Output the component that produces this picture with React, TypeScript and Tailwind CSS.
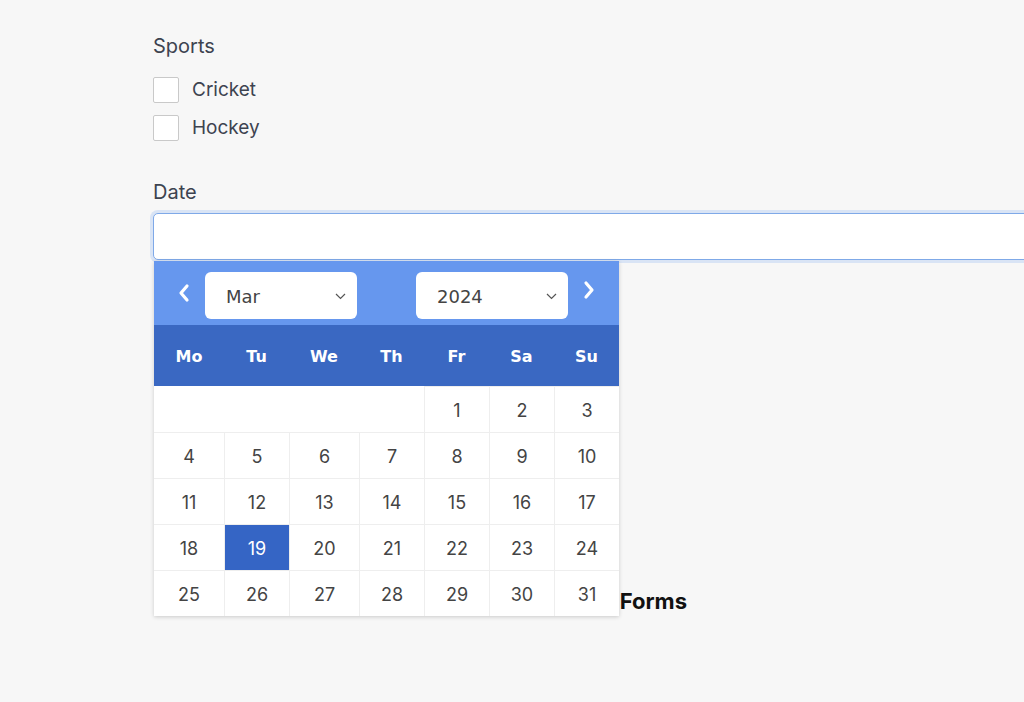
import React from 'react';

const widths = ['w-[70px]', 'w-[65px]', 'w-[70px]', 'w-[65px]', 'w-[65px]', 'w-[65px]', 'w-[65px]'];
const dayNames = ['Mo', 'Tu', 'We', 'Th', 'Fr', 'Sa', 'Su'];

function buildWeeks() {
  const cells: (number | null)[] = [null, null, null, null];
  for (let d = 1; d <= 31; d++) cells.push(d);
  const weeks: (number | null)[][] = [];
  for (let i = 0; i < cells.length; i += 7) weeks.push(cells.slice(i, i + 7));
  return weeks;
}

function SelectBox({ value }: { value: string }) {
  return (
    <div className="flex items-center justify-between w-[152px] h-[47px] bg-white rounded-[6px] pl-[21px] pr-[11px] pt-[2px] text-[18px] text-[#444]" style={{ fontFamily: '"DejaVu Sans", sans-serif' }}>
      <span>{value}</span>
      <svg width="11" height="7" viewBox="0 0 11 7" fill="none">
        <polyline points="1,1 5.5,5.5 10,1" stroke="#555" strokeWidth="1.2" />
      </svg>
    </div>
  );
}

export default function App() {
  const weeks = buildWeeks();

  return (
    <div className="min-h-[702px] bg-[#f7f7f7] text-[#3d4350]" style={{ fontFamily: 'Inter, "Noto Sans", sans-serif' }}>
      <div className="relative pl-[153px] pt-[32px] overflow-hidden h-[702px]">
        <div className="text-[20px] leading-[28px]">Sports</div>

        <div className="mt-[17px] flex flex-col gap-[12px]">
          {['Cricket', 'Hockey'].map((s) => (
            <label key={s} className="flex items-center gap-[13px] h-[26px]">
              <span className="w-[26px] h-[26px] bg-white border border-[#c9c9c9] rounded-[2px]" />
              <span className="text-[19px]">{s}</span>
            </label>
          ))}
        </div>

        <div className="mt-[37px] text-[20px] leading-[28px]">Date</div>
        <div className="mt-[7px] w-[900px] h-[47px] bg-white border border-[#7fa9e8] rounded-[5px] shadow-[0_0_0_3px_rgba(128,170,240,0.25)]" />

        <div className="mt-[325px] w-[534px] text-right text-[22px] font-bold text-[#111]">
          Forms
        </div>

        <div className="absolute left-[154px] top-[261px] w-[465px] bg-white shadow-[0_1px_4px_rgba(0,0,0,0.18)]">
          <div className="h-[64px] bg-[#6697ee] flex items-center pl-[23px] pt-[4px]">
            <svg className="-mt-[4px]" width="14" height="20" viewBox="0 0 14 20" fill="none">
              <polyline points="10,3 4,10 10,17" stroke="white" strokeWidth="3.2" strokeLinecap="round" strokeLinejoin="round" />
            </svg>
            <div className="ml-[14px]">
              <SelectBox value="Mar" />
            </div>
            <div className="ml-[59px]">
              <SelectBox value="2024" />
            </div>
            <svg className="ml-[14px] -mt-[10px]" width="14" height="20" viewBox="0 0 14 20" fill="none">
              <polyline points="4,3 10,10 4,17" stroke="white" strokeWidth="3.2" strokeLinecap="round" strokeLinejoin="round" />
            </svg>
          </div>

          <div className="h-[61px] bg-[#3a68c2] flex pt-[2px]" style={{ fontFamily: '"DejaVu Sans", sans-serif' }}>
            {dayNames.map((d, i) => (
              <div key={d} className={`${widths[i]} flex items-center justify-center text-white font-bold text-[16px]`}>
                {d}
              </div>
            ))}
          </div>

          <div className="flex flex-col">
            {weeks.map((week, wi) => (
              <div key={wi} className="flex h-[46px]">
                {week.map((day, di) => (
                  <div
                    key={di}
                    className={`${widths[di]} flex items-center justify-center pt-[2px] text-[18px] ${
                      day === null ? '' : 'border-l border-t border-[#eeeeee]'
                    } ${di === 0 ? 'border-l-0' : ''} ${
                      day === 19 ? 'bg-[#3565c5] text-white' : 'text-[#444]'
                    }`}
                  >
                    {day ?? ''}
                  </div>
                ))}
              </div>
            ))}
          </div>
        </div>
      </div>
    </div>
  );
}
